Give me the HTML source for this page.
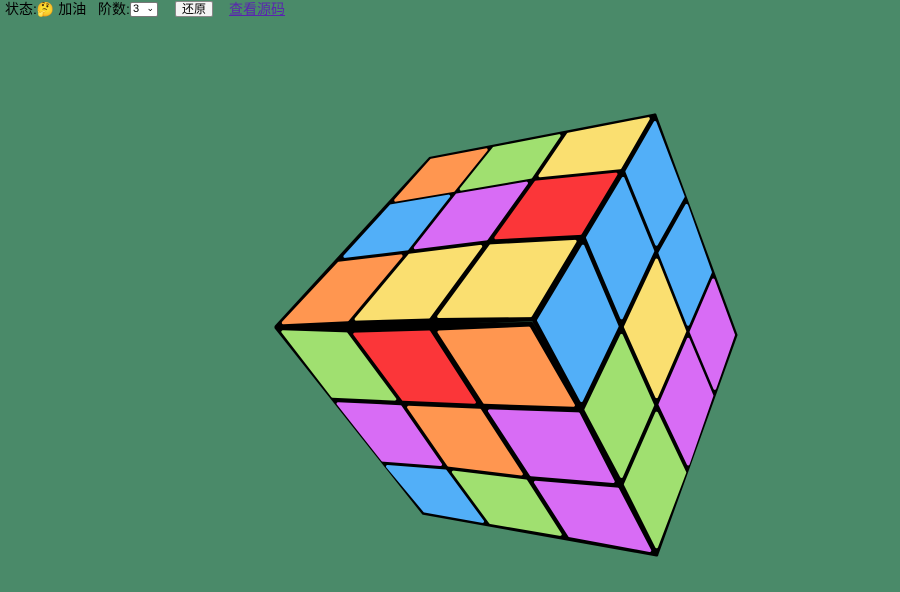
<!DOCTYPE html>
<html><head><meta charset="utf-8">
<style>
html,body{margin:0;padding:0;background:#4a8a69;width:900px;height:592px;overflow:hidden}
#bar{position:absolute;left:5px;top:0;height:18px;font:14px "Liberation Sans","Noto Sans CJK SC",sans-serif;color:#000;white-space:nowrap;line-height:18px}
.t{position:absolute;top:0}
.sel{position:absolute;left:125px;top:2px;width:28px;height:15px;border:1px solid #777;background:#fff;font-size:11px;line-height:13px;box-sizing:border-box;padding-left:2px;border-radius:2px}
.btn{position:absolute;left:170px;top:1px;width:38px;height:16px;border:1px solid #888;background:#f4f4f4;font-size:12px;line-height:14px;text-align:center;box-sizing:border-box;border-radius:2px}
a{color:#5a24b0;text-decoration:underline}
svg{position:absolute;left:0;top:0}
</style></head><body>
<div id="bar"><span class="t" style="left:0">状态:🤔 加油</span><span class="t" style="left:93px">阶数:</span><span class="sel">3<span style="position:absolute;right:3px;top:-1px;font-size:9px">⌄</span></span><span class="btn">还原</span><a class="t" style="left:224px">查看源码</a></div>
<svg id="s" width="900" height="592" viewBox="0 0 900 592"></svg>
<script>
var O='#ff9650',G='#a0e070',Y='#fadf70',B='#52aff8',P='#d86cf5',R='#fb3639';
function c(p){return [p[0]/3+270,p[1]/3+105];}
var faces=[
 {g:[[[480,160],[665,125],[885,82],[1155,30]],[[360,295],[555,262],[790,222],[1060,195]],[[205,465],[415,440],[655,410],[940,395]],[[18,665],[235,655],[480,648],[790,645]]],
  col:[[O,G,Y],[B,P,R],[O,Y,Y]]},
 {g:[[[18,668],[232,675],[482,668],[785,655]],[[185,885],[395,895],[635,905],[935,915]],[[335,1075],[530,1090],[775,1120],[1052,1143]],[[460,1225],[655,1260],[890,1300],[1160,1350]]],
  col:[[G,R,O],[P,O,P],[B,G,P]]},
 {g:[[[790,645],[940,395],[1060,195],[1155,30]],[[935,915],[1055,665],[1160,440],[1250,280]],[[1055,1140],[1160,900],[1255,680],[1330,505]],[[1160,1350],[1255,1100],[1335,870],[1398,690]]],
  col:[[B,B,B],[G,Y,B],[G,P,P]]}
];
var s='';
faces.forEach(function(f){
 var g=f.g.map(function(r){return r.map(c);});
 var out=[g[0][0],g[0][3],g[3][3],g[3][0]];
 s+='<polygon points="'+out.map(function(p){return p.join(',')}).join(' ')+'" fill="#000" stroke="#000" stroke-width="3" stroke-linejoin="round"/>';
 for(var i=0;i<3;i++)for(var j=0;j<3;j++){
  var q=[g[i][j],g[i][j+1],g[i+1][j+1],g[i+1][j]];
  var cx=(q[0][0]+q[1][0]+q[2][0]+q[3][0])/4,cy=(q[0][1]+q[1][1]+q[2][1]+q[3][1])/4;
  var pts=q.map(function(p){return [cx+(p[0]-cx)*0.89,cy+(p[1]-cy)*0.89].map(function(v){return v.toFixed(1)}).join(',')}).join(' ');
  s+='<polygon points="'+pts+'" fill="'+f.col[i][j]+'" stroke="'+f.col[i][j]+'" stroke-width="3" stroke-linejoin="round"/>';
 }
});
document.getElementById('s').innerHTML=s;
</script>
</body></html>
